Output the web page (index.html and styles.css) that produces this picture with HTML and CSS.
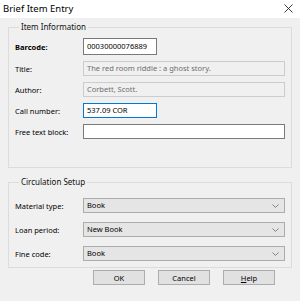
FILE: index.html
```html
<!DOCTYPE html>
<html>
<head>
  <link rel="stylesheet" href="styles.css">
</head>
<body>
  <div class="dialog">
    <div class="titlebar">
      <span class="title">Brief Item Entry</span>
      <svg class="close" width="9" height="9" viewBox="0 0 9 9">
        <path d="M0.5 0.5 L8.5 8.5 M8.5 0.5 L0.5 8.5" stroke="#222" stroke-width="0.9" fill="none"/>
      </svg>
    </div>

    <fieldset class="group group-item">
      <legend>Item Information</legend>
      <div class="form">
        <label class="bold">Barcode:</label>
        <div class="field field-short field-tall">00030000076889</div>

        <label>Title:</label>
        <div class="field field-disabled">The red room riddle : a ghost story.</div>

        <label>Author:</label>
        <div class="field field-disabled">Corbett, Scott.</div>

        <label>Call number:</label>
        <div class="field field-short field-focus">537.09 COR</div>

        <label>Free text block:</label>
        <div class="field"></div>
      </div>
    </fieldset>

    <fieldset class="group group-circ">
      <legend>Circulation Setup</legend>
      <div class="form form-circ">
        <label>Material type:</label>
        <div class="select">Book<svg width="7" height="4" viewBox="0 0 7 4"><path d="M0.5 0.5 L3.5 3.5 L6.5 0.5" stroke="#777" stroke-width="0.9" fill="none"/></svg></div>

        <label>Loan period:</label>
        <div class="select">New Book<svg width="7" height="4" viewBox="0 0 7 4"><path d="M0.5 0.5 L3.5 3.5 L6.5 0.5" stroke="#777" stroke-width="0.9" fill="none"/></svg></div>

        <label>Fine code:</label>
        <div class="select">Book<svg width="7" height="4" viewBox="0 0 7 4"><path d="M0.5 0.5 L3.5 3.5 L6.5 0.5" stroke="#777" stroke-width="0.9" fill="none"/></svg></div>
      </div>
    </fieldset>

    <div class="buttons">
      <button>OK</button>
      <button>Cancel</button>
      <button><u>H</u>elp</button>
    </div>
  </div>
</body>
</html>
```

FILE: styles.css
```css
* {
  margin: 0;
  padding: 0;
  box-sizing: border-box;
  font-family: "Noto Sans", "Open Sans", sans-serif;
}

body {
  width: 300px;
  height: 301px;
  background-color: #f0f0f0;
  overflow: hidden;
}

.titlebar {
  height: 18px;
  background-color: #ffffff;
  display: flex;
  align-items: center;
  justify-content: space-between;
  padding: 0 7px 1px 3px;
}

.title {
  font-size: 9.5px;
  color: #000;
}

.group {
  margin-left: 8px;
  width: 284px;
  border: 1px solid #dcdcdc;
  padding: 0 6px;
}

.group legend {
  font-size: 8px;
  line-height: 10px;
  color: #111;
  padding: 0 2px;
  margin-left: 4px;
}

.group-item {
  margin-top: 4px;
  padding-top: 6px;
  padding-bottom: 28px;
}

.group-circ {
  margin-top: 9px;
  padding-top: 11px;
  padding-bottom: 6px;
}

.form {
  display: grid;
  grid-template-columns: 68px 1fr;
  row-gap: 6px;
  align-items: center;
}

.form-circ {
  row-gap: 9px;
}

label {
  font-size: 7.5px;
  color: #000;
}

label.bold {
  font-weight: bold;
}

.field {
  height: 15px;
  background-color: #fff;
  border: 1px solid #7a7a7a;
  font-size: 7.5px;
  line-height: 13px;
  padding: 0 3px;
  color: #000;
}

.field-short {
  width: 74px;
}

.field-tall {
  height: 17px;
  line-height: 15px;
}

.field-focus {
  border-color: #0078d7;
}

.field-disabled {
  background-color: #f0f0f0;
  border-color: #cccccc;
  color: #6d6d6d;
}

.select {
  height: 15px;
  background-color: #e5e5e5;
  border: 1px solid #acacac;
  font-size: 7.5px;
  line-height: 13px;
  padding: 0 5px 0 3px;
  display: flex;
  align-items: center;
  justify-content: space-between;
}

.buttons {
  display: flex;
  justify-content: flex-end;
  gap: 13px;
  padding: 2px 25px 0 0;
}

button {
  width: 52px;
  height: 15px;
  background-color: #e1e1e1;
  border: 1px solid #adadad;
  font-size: 7.5px;
  color: #000;
}

button u {
  text-decoration: underline;
}
```
